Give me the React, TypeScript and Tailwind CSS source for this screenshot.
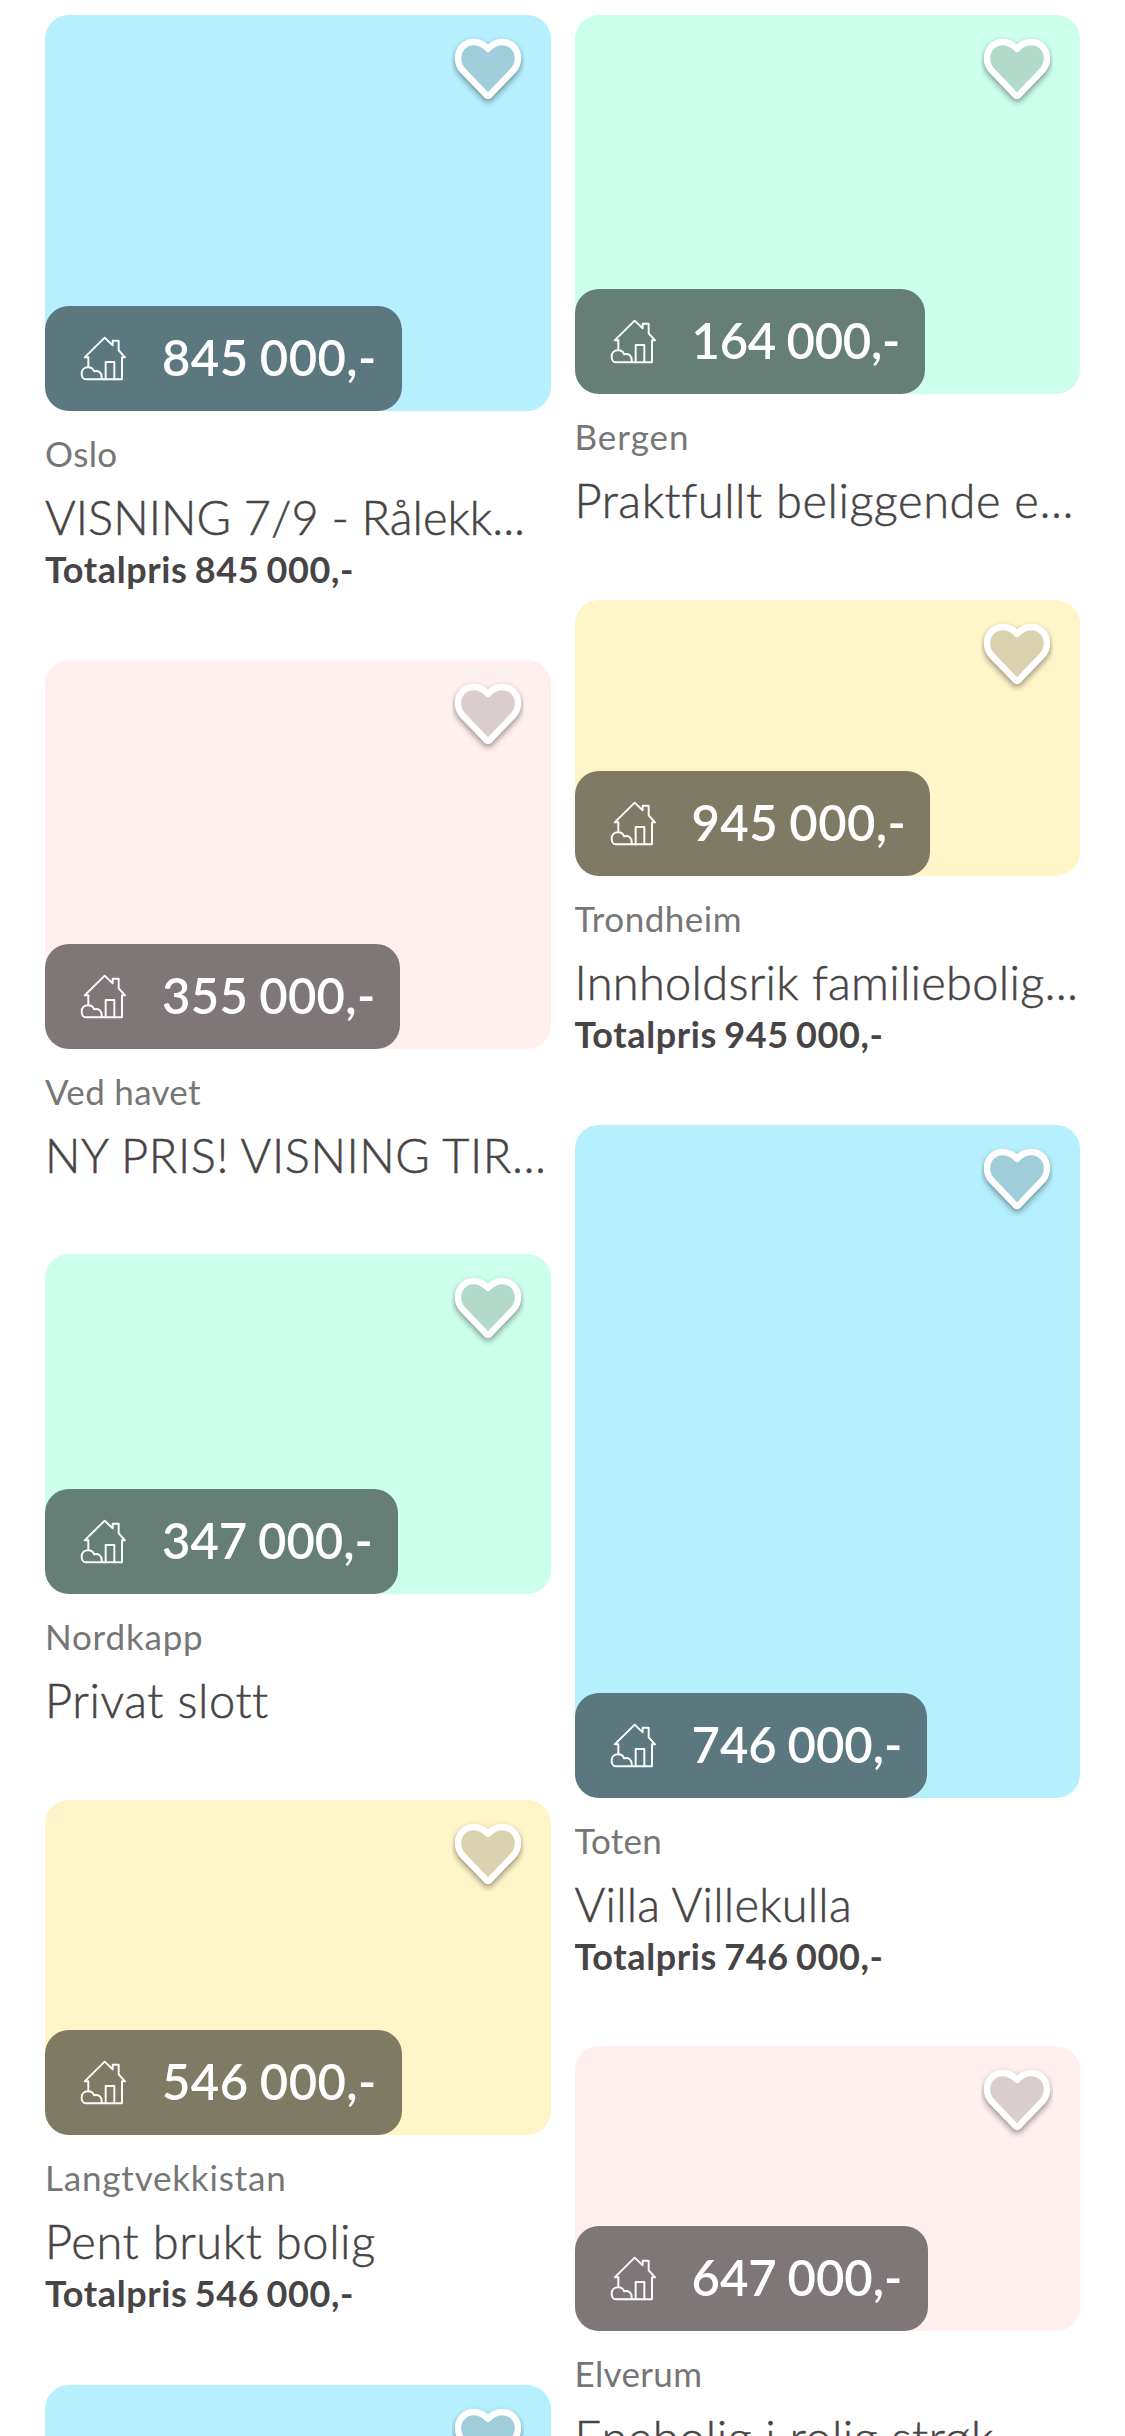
import React from "react";
import clsx from "clsx";

type Listing = {
  place: string;
  placeClass: string;
  title: string;
  titleClass: string;
  price: string;
  priceClass: string;
  badgeClass: string;
  total?: boolean;
  imageClass: string;
  cardClass: string;
};

const BLUE = "bg-[#b6f0ff]";
const PINK = "bg-[#ffefef]";
const MINT = "bg-[#ccffec]";
const YELLOW = "bg-[#fff5c8]";

const leftColumn: Listing[] = [
  {
    place: "Oslo", placeClass: "tracking-[0.4px]",
    title: "VISNING 7/9 - Rålekk...", titleClass: "tracking-[0px]",
    price: "845 000,-", priceClass: "tracking-[0.45px]", badgeClass: "w-[357px]",
    total: true, imageClass: clsx(BLUE, "h-[396px]"), cardClass: "h-[645px]",
  },
  {
    place: "Ved havet", placeClass: "tracking-[0.3px]",
    title: "NY PRIS! VISNING TIR...", titleClass: "tracking-[0.55px]",
    price: "355 000,-", priceClass: "tracking-[0.3px]", badgeClass: "w-[355px]",
    imageClass: clsx(PINK, "h-[389px]"), cardClass: "h-[594px]",
  },
  {
    place: "Nordkapp", placeClass: "tracking-[0.8px]",
    title: "Privat slott", titleClass: "tracking-[0.6px]",
    price: "347 000,-", priceClass: "tracking-[0px]", badgeClass: "w-[353px]",
    imageClass: clsx(MINT, "h-[340px]"), cardClass: "h-[546px]",
  },
  {
    place: "Langtvekkistan", placeClass: "tracking-[0.8px]",
    title: "Pent brukt bolig", titleClass: "tracking-[0.6px]",
    price: "546 000,-", priceClass: "tracking-[0.45px]", badgeClass: "w-[357px]",
    total: true, imageClass: clsx(YELLOW, "h-[335px]"), cardClass: "h-[585px]",
  },
  {
    place: "Oslo", placeClass: "tracking-[0.4px]",
    title: "VISNING 7/9 - Rålekk...", titleClass: "tracking-[0px]",
    price: "845 000,-", priceClass: "tracking-[0.45px]", badgeClass: "w-[357px]",
    total: true, imageClass: clsx(BLUE, "h-[396px]"), cardClass: "h-[645px]",
  },
];

const rightColumn: Listing[] = [
  {
    place: "Bergen", placeClass: "tracking-[1px]",
    title: "Praktfullt beliggende e...", titleClass: "tracking-[0.55px]",
    price: "164 000,-", priceClass: "tracking-[-0.25px]", badgeClass: "w-[350px]",
    imageClass: clsx(MINT, "h-[379px]"), cardClass: "h-[585px]",
  },
  {
    place: "Trondheim", placeClass: "tracking-[0.5px]",
    title: "Innholdsrik familiebolig...", titleClass: "tracking-[0.28px]",
    price: "945 000,-", priceClass: "tracking-[0.45px]", badgeClass: "w-[355px]",
    total: true, imageClass: clsx(YELLOW, "h-[276px]"), cardClass: "h-[525px]",
  },
  {
    place: "Toten", placeClass: "tracking-[0.2px]",
    title: "Villa Villekulla", titleClass: "tracking-[0.2px]",
    price: "746 000,-", priceClass: "tracking-[0px]", badgeClass: "w-[352px]",
    total: true, imageClass: clsx(BLUE, "h-[673px]"), cardClass: "h-[921px]",
  },
  {
    place: "Elverum", placeClass: "tracking-[0.35px]",
    title: "Enebolig i rolig strøk", titleClass: "tracking-[0.48px]",
    price: "647 000,-", priceClass: "tracking-[0px]", badgeClass: "w-[353px]",
    imageClass: clsx(PINK, "h-[285px]"), cardClass: "h-[491px]",
  },
];

const HEART_PATH =
  "M48 28.8C44 24.5 39 22 33.5 22C24.5 22 18 29.4 18 38.2C18 43 19.8 47.4 23 50.7L46.4 75.1Q48 76.6 49.6 75.1L73 50.7C76.2 47.4 78 43 78 38.2C78 29.4 71.5 22 62.5 22C57 22 52 24.5 48 28.8Z";

function Heart({ id }: { id: string }) {
  return (
    <svg viewBox="12 15 72 72" className="absolute top-5 right-[27px] size-[72px]" fill="none" strokeLinejoin="round">
      <mask id={id} maskUnits="userSpaceOnUse" x="12" y="15" width="72" height="72">
        <rect x="12" y="15" width="72" height="72" fill="#fff" />
        <path d={HEART_PATH} fill="#000" />
      </mask>
      {/* The shadow falls only outside the heart */}
      <g mask={`url(#${id})`}>
        <path
          d={HEART_PATH}
          fill="#fff"
          stroke="#fff"
          strokeWidth="5.6"
          className="drop-shadow-[0_3px_3px_rgba(0,0,0,0.45)]"
        />
      </g>
      <path d={HEART_PATH} fill="#474445" fillOpacity="0.2" />
      <path d={HEART_PATH} stroke="#fff" strokeWidth="6.4" />
    </svg>
  );
}

function House() {
  return (
    <svg
      viewBox="0 0 210 195"
      className="mb-0.5 h-[65px] w-[70px] shrink-0"
      fill="none"
      stroke="#fff"
      strokeWidth="5.8"
      strokeLinejoin="round"
      strokeLinecap="round"
    >
      <path d="M55 127V97H44L104 38L128 61V47.500H146V76L165 97H156V163H48C39 163 35 154 35 146C35 134 43 127 54 127C64 127 70 132 72 139C85 135 95 143 95 156V163" />
      <path d="M107 163V111H133V163" />
    </svg>
  );
}

function Card({ item, id }: { item: Listing; id: string }) {
  return (
    <article className={clsx("shrink-0", item.cardClass)}>
      <div className={clsx("relative flex items-end rounded-3xl", item.imageClass)}>
        <Heart id={id} />
        <div className={clsx("flex h-[105px] items-center rounded-3xl bg-black/50 pl-[25px]", item.badgeClass)}>
          <House />
          <span
            className={clsx(
              "ml-[22px] pb-1 text-[49px] leading-[56px] font-semibold [word-spacing:-1.5px] whitespace-nowrap text-white",
              item.priceClass,
            )}
          >
            {item.price}
          </span>
        </div>
      </div>
      <p className={clsx("mt-[22px] text-[35px] leading-10 text-[#767676]", item.placeClass)}>{item.place}</p>
      <h2
        className={clsx(
          "mt-4 text-[47px] leading-[56px] font-light whitespace-nowrap [-webkit-text-stroke:0.5px_#474445]",
          item.titleClass,
        )}
      >
        {item.title}
      </h2>
      {item.total && (
        <p className="mt-1 text-[36px] leading-10 font-bold tracking-[0.6px] [word-spacing:-2px]">
          Totalpris {item.price}
        </p>
      )}
    </article>
  );
}

export default function App() {
  return (
    <main className="grid h-[2436px] grid-cols-2 gap-6 overflow-hidden bg-white px-[45px] pt-[15px] font-[Lato,sans-serif] text-[#474445]">
      <div className="flex flex-col">
        {leftColumn.map((item, i) => (
          <Card key={i} item={item} id={`left-${i}`} />
        ))}
      </div>
      <div className="flex flex-col">
        {rightColumn.map((item, i) => (
          <Card key={i} item={item} id={`right-${i}`} />
        ))}
      </div>
    </main>
  );
}
